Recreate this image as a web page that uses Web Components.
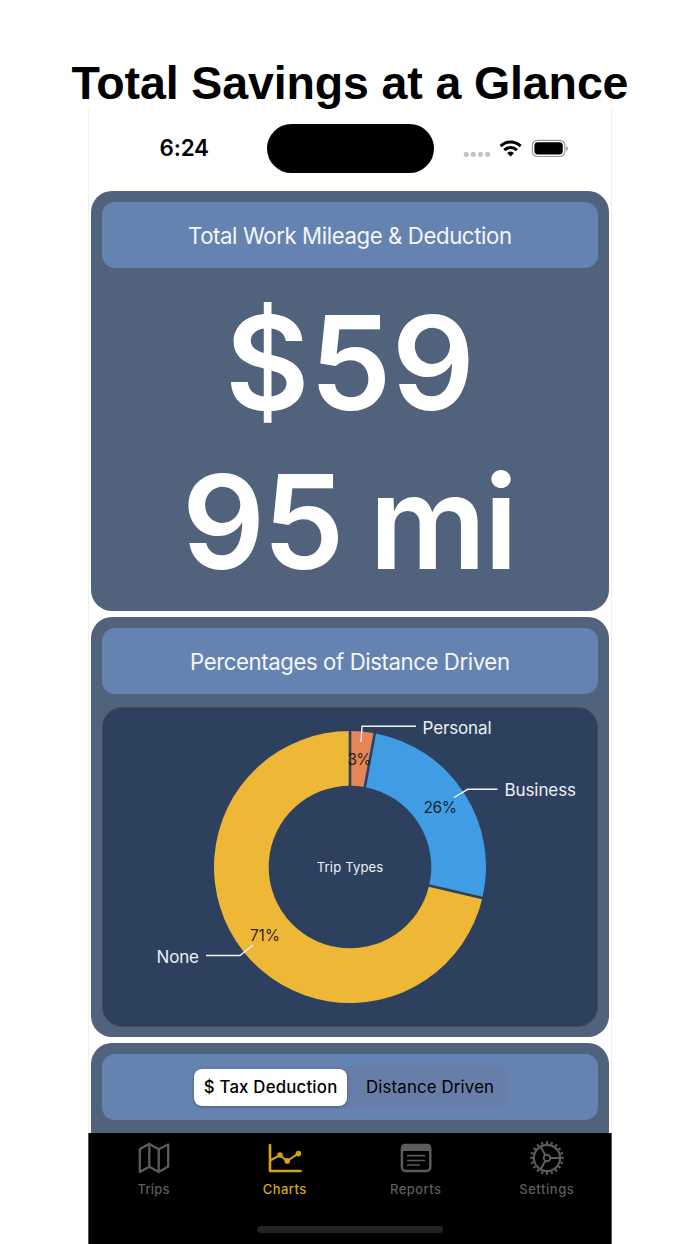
<!DOCTYPE html>
<html lang="en">
<head>
<meta charset="utf-8">
<title>Total Savings at a Glance</title>
<style>
  body {
    margin: 0;
    width: 700px;
    height: 1244px;
    overflow: hidden;
    background: #fff;
    color: #000;
    font-family: Inter, "Liberation Sans", sans-serif;
  }
</style>
</head>
<body>
<savings-page></savings-page>

<script>
/*
 * A line of text, tracked so that it fills the given width.
 */
customElements.define('fit-text',
  class extends HTMLElement {
    constructor () {
      super()
      this.attachShadow({ mode: 'open' }).innerHTML = `
        <style>
          :host { display: inline-block; white-space: nowrap; }
          span { display: inline-block; }
        </style>
        <span><slot></slot></span>
      `
    }

    connectedCallback () {
      const span = this.shadowRoot.querySelector('span')
      const target = Number(this.getAttribute('width'))
      const count = this.textContent.length - 1
      span.style.letterSpacing = '0'
      const space = (target - span.getBoundingClientRect().width) / count
      span.style.letterSpacing = `${space}px`
      span.style.marginRight = `${-space}px`
    }
  }
)

/*
 * Clock, island and the signal, wifi and battery icons.
 */
customElements.define('status-bar',
  class extends HTMLElement {
    constructor () {
      super()
      this.attachShadow({ mode: 'open' }).innerHTML = `
        <style>
          :host {
            display: grid;
            grid-template-columns: 177.5px 167px 177.5px;
            height: 82px;
            padding-top: 15.4px;
            box-sizing: border-box;
          }
          .time {
            height: 49px;
            padding-left: 70.5px;
            line-height: 48px;
            font-size: 22.4px;
            font-weight: 600;
          }
          .island {
            height: 49px;
            border-radius: 25px;
            background: #000;
          }
          svg { display: block; margin: 10.6px 0 0 28.5px; }
        </style>
        <div class="time"><fit-text width="49.5">6:24</fit-text></div>
        <div class="island"></div>
        <svg width="110" height="26" viewBox="462 135 110 26">
          <g fill="#c2c2c2">
            <rect x="463.8" y="152" width="4.8" height="4.8" rx="1.6"/>
            <rect x="470.9" y="152" width="4.8" height="4.8" rx="1.6"/>
            <rect x="478.1" y="152" width="4.8" height="4.8" rx="1.6"/>
            <rect x="485.2" y="152" width="4.8" height="4.8" rx="1.6"/>
          </g>
          <g fill="none" stroke="#000" stroke-width="2.9">
            <path d="M500.6 146.1a14.2 14.2 0 0 1 20 0"/>
            <path d="M504.3 150.1a9 9 0 0 1 12.6 0"/>
          </g>
          <path d="M507.2 153.1a5 5 0 0 1 6.8 0l-3.4 3.5z"/>
          <rect x="532.4" y="140.3" width="32.4" height="16.2" rx="5" fill="none" stroke="#999" stroke-width="1.2"/>
          <rect x="534.4" y="142.3" width="28.4" height="12.2" rx="3.4"/>
          <path d="M566.2 146c2.3.8 2.3 4.2 0 5z" fill="#999"/>
        </svg>
      `
    }
  }
)

/*
 * A slate card with a blue header strip.
 */
customElements.define('stat-card',
  class extends HTMLElement {
    constructor () {
      super()
      this.attachShadow({ mode: 'open' }).innerHTML = `
        <style>
          :host {
            display: block;
            flex: none;
            box-sizing: border-box;
            height: 420px;
            padding: 10.5px 11px 0;
            border-radius: 21px;
            background: #51627c;
          }
          header {
            display: flex;
            align-items: center;
            justify-content: center;
            box-sizing: border-box;
            height: 66.5px;
            padding-top: 1px;
            border-radius: 13px;
            background: #6583b1;
            color: #f4f6fa;
            font-size: 22.2px;
          }
        </style>
        <header><slot name="header"></slot></header>
        <slot></slot>
      `
    }
  }
)

/*
 * The two large totals.
 */
customElements.define('big-totals',
  class extends HTMLElement {
    constructor () {
      super()
      this.attachShadow({ mode: 'open' }).innerHTML = `
        <style>
          :host {
            display: flex;
            flex-direction: column;
            align-items: center;
            padding-top: 15px;
            color: #fff;
            font-size: 130px;
            font-weight: 580;
            line-height: 159px;
            word-spacing: -3px;
          }
        </style>
        <slot></slot>
      `
    }
  }
)

const TRIPS = [
  { name: 'Personal', share: '3%', from: 0, to: 10.5, color: '#e68556',
    line: '361,742 362,726.3 416,726.3', label: [422.5, 734, 69], value: [347.5, 765, 24] },
  { name: 'Business', share: '26%', from: 10.5, to: 103.2, color: '#409ce4',
    line: '454,797.5 467.7,789.3 497.5,789.3', label: [504.5, 796.3, 71.5], value: [423.5, 813, 33.5] },
  { name: 'None', share: '71%', from: 103.2, to: 360, color: '#eeb735',
    line: '253,945 240,955.5 206,955.5', label: [156.5, 962.7, 42.5], value: [250, 941.3, 30] }
]

/*
 * Donut chart of the trip types with leader lines.
 */
customElements.define('trip-donut',
  class extends HTMLElement {
    constructor () {
      super()
      this.attachShadow({ mode: 'open' }).innerHTML = `
        <style>
          :host {
            display: block;
            box-sizing: border-box;
            height: 320px;
            margin-top: 13px;
            border: 1px solid #484b50;
            border-radius: 20px;
            background: #2d415f;
            overflow: hidden;
          }
          svg { display: block; font-family: inherit; }
          .label { fill: #eef0f4; font-size: 17px; }
          .value { fill: #111; fill-opacity: .9; font-size: 15.5px; }
          .title { fill: #eef0f4; font-size: 13px; }
        </style>
        <svg width="494" height="318" viewBox="103 708 494 318"></svg>
      `
      this.shadowRoot.querySelector('svg').innerHTML = this.draw()
    }

    /**
     * Returns the point at an angle, clockwise from the top.
     */
    point (angle, radius) {
      const rad = angle * Math.PI / 180
      return `${350 + radius * Math.sin(rad)} ${867 - radius * Math.cos(rad)}`
    }

    draw () {
      const slices = TRIPS.map(t => {
        const large = t.to - t.from > 180 ? 1 : 0
        return `<path fill="${t.color}" d="M${this.point(t.from, 136)}
          A136 136 0 ${large} 1 ${this.point(t.to, 136)}
          L${this.point(t.to, 81.3)}
          A81.3 81.3 0 ${large} 0 ${this.point(t.from, 81.3)}z"/>`
      })
      const gaps = TRIPS.map(t =>
        `<path stroke="#2d415f" stroke-width="2.6" d="M${this.point(t.from, 79)}L${this.point(t.from, 138)}"/>`)
      const texts = TRIPS.map(t => {
        const [x, y, w] = t.label
        const [vx, vy, vw] = t.value
        return `<polyline points="${t.line}" fill="none" stroke="#f2f3f5" stroke-width="1.4"/>
          <text class="label" x="${x}" y="${y}" textLength="${w}">${t.name}</text>
          <text class="value" x="${vx}" y="${vy}" textLength="${vw}">${t.share}</text>`
      })
      return [...slices, ...gaps, ...texts].join('') +
        '<text class="title" x="316.7" y="872.2" textLength="66.5">Trip Types</text>'
    }
  }
)

customElements.define('segmented-control',
  class extends HTMLElement {
    constructor () {
      super()
      this.attachShadow({ mode: 'open' }).innerHTML = `
        <style>
          :host {
            display: grid;
            grid-template-columns: 153px 159px;
            box-sizing: border-box;
            width: 317px;
            height: 43px;
            margin-left: 1px;
            padding: 3px 2px;
            border-radius: 10px;
            background: #667ea8;
            color: #000;
            font-size: 16.8px;
            line-height: 37px;
            text-align: center;
          }
          .on {
            height: 37px;
            border-radius: 8px;
            background: #fff;
            box-shadow: 0 1px 3px rgba(0, 0, 0, .25);
            font-weight: 500;
          }
          .off { padding-left: 7px; }
        </style>
        <div class="on"><fit-text width="133.5">$ Tax Deduction</fit-text></div>
        <div class="off"><fit-text width="128">Distance Driven</fit-text></div>
      `
    }
  }
)

// 20 short teeth round the ring of the gear
const TEETH = Array.from({ length: 20 }, (_, i) =>
  `<path d="M14 0H16.8" transform="rotate(${i * 18})" stroke-width="2.1" stroke-linecap="butt"/>`).join('')

const ICONS = {
  map: `<g stroke-width="2.3">
    <path d="M-14.2 -9L-4.7 -14L4.7 -8.7L14.2 -13.5V8.5L4.7 14L-4.7 8.8L-14.2 14z"/>
    <path d="M-4.7 -14V8.8M4.7 -8.7V14"/></g>`,
  chart: `<g stroke-width="2.6"><path d="M-15 -13V13H15.5"/></g>
    <path stroke-width="2" d="M-14 2L-5 -2.8L2 3L13.3 -4.3"/>
    <g fill="currentColor" stroke="none"><circle cx="-5" cy="-3" r="2.8"/><circle cx="2.2" cy="2.9" r="2.8"/><circle cx="13.4" cy="-4.4" r="2.8"/></g>`,
  report: `<rect x="-14.1" y="-13" width="28.4" height="26" rx="3.5" stroke-width="2.4"/>
    <path fill="currentColor" stroke="none" d="M-15 -7V-10.5Q-15 -14 -11.5 -14H11.5Q15 -14 15 -10.5V-7z"/>
    <path stroke-width="1.7" d="M-8.2 -2.3H8.3M-8.2 2.5H8.3M-8.2 7H3"/>`,
  gear: `<circle r="13.1" stroke-width="2.1"/><circle r="3.3" stroke-width="1.9"/>
    <path stroke-width="2" d="M3.3 0H13M-1.7 -2.9L-6.6 -11.4M-1.7 2.9L-6.6 11.4"/>${TEETH}`
}

/*
 * One item of the tab bar.
 */
customElements.define('tab-item',
  class extends HTMLElement {
    constructor () {
      super()
      this.attachShadow({ mode: 'open' }).innerHTML = `
        <style>
          :host {
            display: flex;
            flex-direction: column;
            align-items: center;
            gap: 3px;
            color: #5c5c5c;
            font-size: 13px;
            font-weight: 500;
            line-height: 18px;
          }
          :host([active]) { color: #d3a617; }
          svg { display: block; height: 38px; }
        </style>
        <svg width="38" height="38" viewBox="-19 -19 38 38" fill="none" stroke="currentColor"
          stroke-linecap="round" stroke-linejoin="round">${ICONS[this.getAttribute('icon')]}</svg>
        <fit-text width="${this.getAttribute('width')}">${this.getAttribute('label')}</fit-text>
      `
    }
  }
)

customElements.define('tab-bar',
  class extends HTMLElement {
    constructor () {
      super()
      this.attachShadow({ mode: 'open' }).innerHTML = `
        <style>
          :host {
            display: flex;
            flex-direction: column;
            justify-content: space-between;
            align-items: center;
            flex: none;
            box-sizing: border-box;
            height: 111px;
            margin: 0 -1px;
            padding: 6px 0 11px;
            border: solid #555;
            border-width: 0 1px;
            background: #000;
          }
          nav { display: grid; grid-template-columns: repeat(4, 131px); }
          .home { width: 186px; height: 7px; border-radius: 4px; background: #232323; }
        </style>
        <nav>
          <tab-item icon="map" label="Trips" width="32"></tab-item>
          <tab-item icon="chart" label="Charts" width="43.5" active></tab-item>
          <tab-item icon="report" label="Reports" width="51"></tab-item>
          <tab-item icon="gear" label="Settings" width="54.5"></tab-item>
        </nav>
        <div class="home"></div>
      `
    }
  }
)

customElements.define('savings-page',
  class extends HTMLElement {
    constructor () {
      super()
      this.attachShadow({ mode: 'open' }).innerHTML = `
        <style>
          :host { display: flex; flex-direction: column; align-items: center; height: 1244px; }
          h1 {
            flex: none;
            box-sizing: border-box;
            height: 109px;
            margin: 0;
            padding-top: 56px;
            font: bold 46.5px/54px "Liberation Sans", sans-serif;
          }
          .phone {
            display: flex;
            flex-direction: column;
            width: 522px;
            height: 1135px;
            border: solid #f0f0f0;
            border-width: 0 1px;
          }
          .cards {
            display: flex;
            flex-direction: column;
            gap: 6px;
            height: 942px;
            padding: 0 2px;
            overflow: hidden;
          }
        </style>
        <h1><fit-text width="557">Total Savings at a Glance</fit-text></h1>
        <div class="phone">
          <status-bar></status-bar>
          <div class="cards">
            <stat-card>
              <fit-text slot="header" width="324">Total Work Mileage &amp; Deduction</fit-text>
              <big-totals>
                <fit-text width="250">$59</fit-text>
                <fit-text width="336">95 mi</fit-text>
              </big-totals>
            </stat-card>
            <stat-card>
              <fit-text slot="header" width="320">Percentages of Distance Driven</fit-text>
              <trip-donut></trip-donut>
            </stat-card>
            <stat-card>
              <segmented-control slot="header"></segmented-control>
            </stat-card>
          </div>
          <tab-bar></tab-bar>
        </div>
      `
    }
  }
)
</script>
</body>
</html>
